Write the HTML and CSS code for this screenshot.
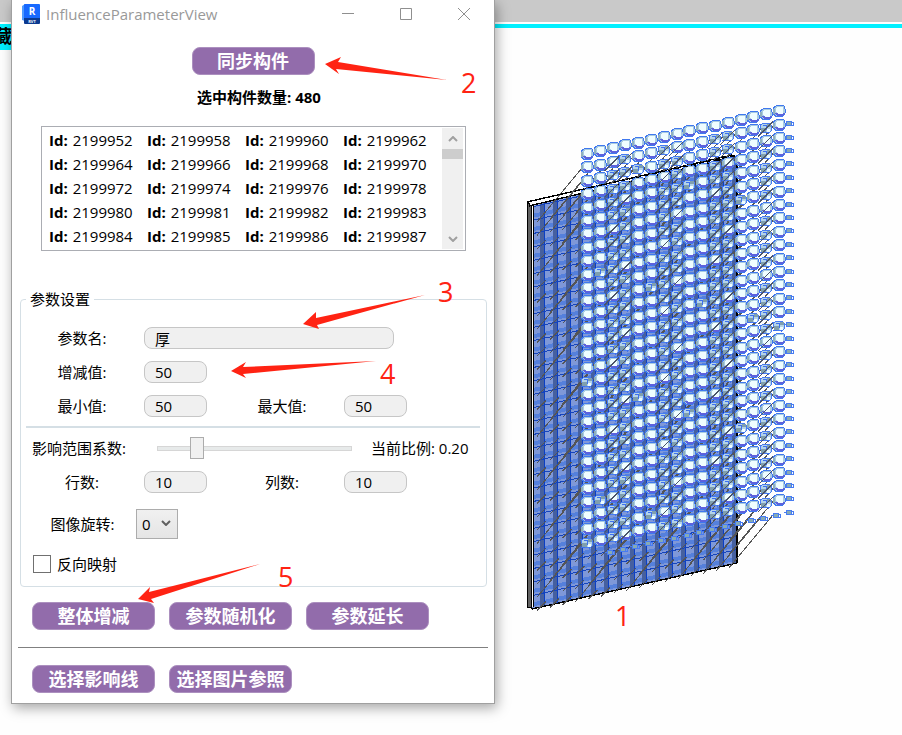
FILE: index.html
```html
<!DOCTYPE html>
<html lang="zh-CN">
<head>
<meta charset="utf-8">
<title>InfluenceParameterView</title>
<link rel="stylesheet" href="styles.css">
</head>
<body>
<main class="desktop">
  <div class="ribbon"></div>
  <div class="view-edge"></div>
  <span class="view-tab">藏</span>

  <svg class="model" viewBox="515 95 290 525" role="img" aria-label="三维模型" shape-rendering="crispEdges">
    <defs>
      <clipPath id="wallClip"><path d="M532 206L737 156V563L532 609Z"/></clipPath>
      <g id="ball">
        <path d="M-6-3L-3-5L2-6L5-5L6-2V2L4 5L-2 6L-6 3Z" fill="#a9cbe0" stroke="#3f78ef"/>
        <path d="M-5 2L-2 5L3 5L6 2L2 3L-2 2Z" fill="#5d62dc"/>
        <path d="M-5-2V3" stroke="#8eb0be" stroke-width="2"/>
        <path d="M-2-4H3L4-3V2L3 3H-1L-3 1V-3Z" fill="#effdff"/>
      </g>
      <g id="rough">
        <path d="M-6-2L-3-5L3-5L5-3L5 3L2 5L-4 4Z" fill="#b4d3e8" stroke="#477cf2"/>
        <path d="M-5 0H0V4H-5ZM1-4H5V-1H1Z" fill="#7f9fae"/>
        <path d="M-3-3H0V1H4M-6 4H-2M2 2V6M-7-4H-4" fill="none" stroke="#3e70ee"/>
        <path d="M1 1H4V4H1Z" fill="#effdff"/>
      </g>
      <g id="cap">
        <path d="M-3-2H2V2H-3Z" fill="#86aab5" stroke="#477cf2"/>
        <path d="M-5 0H-3M2-1H4V2H2" stroke="#477cf2" fill="none"/>
      </g>
    </defs>
    <g id="wall" clip-path="url(#wallClip)"></g>
    <path d="M527 202L531 205V608L527 607Z" fill="#626262" stroke="#000"/>
    <path d="M527 202L732 155M529 206L737 156M532 609L737 563" fill="none" stroke="#000" stroke-width="1.4"/>
    <path d="M530 204L580 192" stroke="#fff" stroke-width="2"/>
    <path d="M533 206V607M737 156V563" stroke="#000" stroke-width="1.6"/>
    <path d="M532 206V607" stroke="#fff"/>
    <g id="rods" fill="none" stroke="#555"></g>
    <g id="balls"></g>
    <path d="M527 202L737 155" stroke="#000" stroke-dasharray="5 3"/>
  </svg>

  <section class="window">
    <header class="titlebar">
      <svg class="app-icon" viewBox="0 0 18 20" aria-hidden="true">
        <path d="M0 2L3 0V17L0 16Z" fill="#4f9bff"/>
        <rect x="2" y="0" width="16" height="16" rx="1" fill="#1769ff"/>
        <path d="M2 14H18V19Q18 20 17 20H3Q2 20 2 19Z" fill="#0b3a91"/>
        <text x="10" y="11" class="icon-letter">R</text>
        <text x="10" y="19" class="icon-tag">RVT</text>
      </svg>
      <h1 class="title">InfluenceParameterView</h1>
      <button class="caption" aria-label="最小化"><svg viewBox="0 0 14 14"><path d="M1 6.500H13"/></svg></button>
      <button class="caption" aria-label="最大化"><svg viewBox="0 0 14 14"><path d="M1.500 1.500H12.500V12.500H1.500Z"/></svg></button>
      <button class="caption" aria-label="关闭"><svg viewBox="0 0 14 14"><path d="M1 1L13 13M13 1L1 13"/></svg></button>
    </header>

    <div class="sync"><button class="action">同步构件</button></div>
    <p class="count">选中构件数量: 480</p>

    <div class="listbox">
      <ul class="ids">
        <li><b>Id:</b> 2199952</li><li><b>Id:</b> 2199958</li><li><b>Id:</b> 2199960</li><li><b>Id:</b> 2199962</li>
        <li><b>Id:</b> 2199964</li><li><b>Id:</b> 2199966</li><li><b>Id:</b> 2199968</li><li><b>Id:</b> 2199970</li>
        <li><b>Id:</b> 2199972</li><li><b>Id:</b> 2199974</li><li><b>Id:</b> 2199976</li><li><b>Id:</b> 2199978</li>
        <li><b>Id:</b> 2199980</li><li><b>Id:</b> 2199981</li><li><b>Id:</b> 2199982</li><li><b>Id:</b> 2199983</li>
        <li><b>Id:</b> 2199984</li><li><b>Id:</b> 2199985</li><li><b>Id:</b> 2199986</li><li><b>Id:</b> 2199987</li>
      </ul>
      <div class="scrollbar">
        <button class="scroll-step" aria-label="向上滚动"><svg viewBox="0 0 10 6"><path d="M1 5L5 1L9 5"/></svg></button>
        <div class="scroll-thumb"></div>
        <button class="scroll-step scroll-down" aria-label="向下滚动"><svg viewBox="0 0 10 6"><path d="M1 1L5 5L9 1"/></svg></button>
      </div>
    </div>

    <fieldset class="params">
      <legend>参数设置</legend>
      <div class="row">
        <label for="pname">参数名:</label><input class="field wide" id="pname" value="厚">
      </div>
      <div class="row">
        <label for="delta">增减值:</label><input class="field" id="delta" value="50">
      </div>
      <div class="row">
        <label for="vmin">最小值:</label><input class="field" id="vmin" value="50">
        <label for="vmax">最大值:</label><input class="field" id="vmax" value="50">
      </div>
      <hr class="divider">
      <div class="row slider-row">
        <label for="ratio">影响范围系数:</label>
        <input class="slider" id="ratio" type="range" min="0" max="1" step="any" value="0.18">
        <output for="ratio">当前比例: 0.20</output>
      </div>
      <div class="row">
        <label for="rows">行数:</label><input class="field" id="rows" value="10">
        <label for="cols">列数:</label><input class="field" id="cols" value="10">
      </div>
      <div class="row rotate-row">
        <label for="rotate">图像旋转:</label>
        <span class="combo">
          <select id="rotate"><option>0</option></select>
          <svg viewBox="0 0 10 6" aria-hidden="true"><path d="M1 1L5 5L9 1"/></svg>
        </span>
      </div>
      <label class="check"><input type="checkbox">反向映射</label>
    </fieldset>

    <div class="actions">
      <button class="action">整体增减</button>
      <button class="action">参数随机化</button>
      <button class="action">参数延长</button>
    </div>
    <hr class="rule">
    <div class="actions">
      <button class="action">选择影响线</button>
      <button class="action">选择图片参照</button>
    </div>
  </section>

  <svg class="notes" viewBox="0 0 902 735">
    <path d="M325 64L341 57L338 62L447 80L336 69L339 74Z"/>
    <path d="M303 324L316 312L316 318L425 295L317 325L319 329Z"/>
    <path d="M231 371L246 362L243 367L376 361L243 374L246 378Z"/>
    <path d="M138 599L150 587L149 592L260 564L151 599L154 603Z"/>
    <text x="461" y="93">2</text>
    <text x="438" y="302">3</text>
    <text x="380" y="384">4</text>
    <text x="278" y="587">5</text>
    <text x="615" y="626">1</text>
  </svg>
</main>
<script src="model.js"></script>
</body>
</html>
```
FILE: styles.css
```css
* { box-sizing: border-box; }

body {
  margin: 0;
  background: #fefefe;
  color: #000;
  font: 15px/20px "Open Sans", "Noto Sans CJK SC", sans-serif;
}

button, input, select { font: inherit; color: inherit; }

.desktop {
  position: relative;
  min-height: 100vh;
  overflow: hidden;
}

.ribbon { height: 22px; background: #c9c9c9; }

.view-edge { height: 4px; margin-top: 2px; background: #00f0ff; }

.view-tab {
  position: absolute;
  left: 0;
  top: 24px;
  width: 12px;
  height: 26px;
  display: flex;
  justify-content: flex-end;
  overflow: hidden;
  background: #00f0ff;
  font-size: 18px;
  line-height: 25px;
  font-weight: 700;
}

.model {
  position: absolute;
  left: 515px;
  top: 95px;
  width: 290px;
  height: 525px;
}

.window {
  position: absolute;
  left: 11px;
  top: 0;
  width: 484px;
  padding-bottom: 10px;
  border: 1px solid #a0a0a0;
  border-top: 0;
  background: #fff;
  box-shadow: 2px 4px 12px rgba(0, 0, 0, .35);
}

.titlebar {
  display: flex;
  align-items: center;
  height: 28px;
  padding: 0 1px 0 10px;
}

.app-icon { width: 18px; height: 20px; }

.icon-letter {
  font-size: 10px;
  font-weight: 700;
  fill: #fff;
  text-anchor: middle;
}

.icon-tag {
  font-size: 4px;
  font-weight: 700;
  fill: #fff;
  text-anchor: middle;
}

.title {
  flex: 1;
  margin: 0 0 0 6px;
  color: #999;
  font-size: 15px;
  font-weight: 400;
}

.caption {
  display: grid;
  place-items: center;
  width: 58px;
  height: 28px;
  padding: 0;
  border: 0;
  background: none;
}

.caption svg {
  width: 14px;
  height: 14px;
  fill: none;
  stroke: #8f8f8f;
}

.sync {
  display: flex;
  justify-content: center;
  padding-top: 19px;
}

.action {
  width: 123px;
  height: 28px;
  padding: 0;
  border: 1px solid #ac90bf;
  border-radius: 8px;
  background: #926cab;
  color: #fff;
  font-size: 18px;
  line-height: 24px;
  font-weight: 700;
}

.count {
  margin: 12px 0 19px;
  padding-left: 12px;
  text-align: center;
  font-weight: 700;
}

.listbox {
  display: flex;
  margin: 0 28px 0 29px;
  padding: 1px 2px 1px 0;
  border: 1px solid #abadb3;
}

.ids {
  flex: 1;
  display: grid;
  grid-template-columns: repeat(4, 98px);
  margin: 0;
  padding: 0 0 1px 7px;
  list-style: none;
  line-height: 24px;
}

.ids li { white-space: nowrap; }

.ids b { margin-right: 1px; }

.scrollbar {
  display: flex;
  flex-direction: column;
  width: 21px;
  background: #f0f0f0;
}

.scroll-step {
  display: grid;
  place-items: center;
  height: 21px;
  padding: 0;
  border: 0;
  background: none;
}

.scroll-step svg, .combo svg {
  width: 10px;
  height: 6px;
  fill: none;
  stroke: #a0a0a0;
  stroke-width: 2;
}

.scroll-down { margin-top: auto; }

.scroll-thumb { height: 10px; background: #cdcdcd; }

.params {
  margin: 38px 7px 0 8px;
  padding: 12px 6px 7px 5px;
  border: 1px solid #d5dfe5;
  border-radius: 4px;
}

.params legend { padding: 0 4px; }

.row {
  display: grid;
  grid-template-columns: 112px 76px 112px 1fr;
  column-gap: 6px;
  align-items: center;
  height: 34px;
}

.row label { text-align: center; }

.field {
  width: 63px;
  height: 22px;
  padding: 0 10px;
  border: 1px solid #c6c6c6;
  border-radius: 8px;
  background: #f0f0f0;
}

.wide { grid-column: 2 / -1; width: 250px; }

.divider {
  height: 2px;
  margin: 3px 0;
  border: 0;
  background: #d5dfe5;
}

.slider-row { grid-template-columns: 112px 195px 1fr; column-gap: 19px; }

.slider-row label { white-space: nowrap; padding-right: 6px; }

.slider {
  appearance: none;
  width: 100%;
  height: 22px;
  margin: 0;
  background: none;
}

.slider::-webkit-slider-runnable-track {
  height: 5px;
  border: 1px solid #d6d6d6;
  background: #e7eaea;
}

.slider::-webkit-slider-thumb {
  appearance: none;
  width: 14px;
  height: 22px;
  margin-top: -10px;
  border: 1px solid #acacac;
  background: #f0f0f0;
}

.rotate-row { height: 50px; column-gap: 0; grid-template-columns: 110px 1fr; }

.rotate-row label { padding-left: 3px; }

.combo { position: relative; width: 42px; }

.combo select {
  display: block;
  appearance: none;
  width: 42px;
  height: 30px;
  padding: 0 5px;
  border: 1px solid #acacac;
  border-radius: 0;
  background: linear-gradient(#f0f0f0, #e5e5e5);
}

.combo svg {
  position: absolute;
  right: 7px;
  top: 11px;
  stroke: #606060;
}

.check {
  display: flex;
  align-items: center;
  gap: 6px;
  height: 30px;
  padding-left: 7px;
}

.check input {
  appearance: none;
  width: 18px;
  height: 18px;
  margin: 0;
  border: 1px solid #707070;
  background: #fff;
}

.actions {
  display: flex;
  gap: 14px;
  padding: 15px 20px 0;
}

.rule {
  height: 1px;
  margin: 17px 6px 2px;
  border: 0;
  background: #808080;
}

.notes {
  position: absolute;
  left: 0;
  top: 0;
  width: 902px;
  height: 735px;
  fill: #ff2313;
  font-size: 27px;
  pointer-events: none;
}
```
FILE: model.js
```js
// Draws the 16 x 30 panel wall, its connecting rods and the ball markers.
const COLS = 16;
const ROWS = 30;
const DX = 12.8;
const DY = 13.4;
const SKEW = -2.85;

const part = (x, y, name) => `<use href="#${name}" x="${Math.round(x)}" y="${Math.round(y)}"/>`;

let wall = '<path d="M532 150H740V612H532Z" fill="#7f98d8"/>';
for (let r = 0; r < ROWS + 4; r++) {
  const y = 207 + r * DY;
  wall += `<path d="M532 ${y + 7}L737 ${y - 39}v4L532 ${y + 11}Z" fill="#5580dc"/>`;
}
for (let c = 0; c < COLS; c++) {
  const x = 532 + c * DX;
  wall += `<path d="M${x + 8} 150h4V612h-4Z" fill="#46609f"/>`;
  wall += `<path d="M${x + 12.5} 150V612" stroke="#0b3fc4"/>`;
}
for (let r = 0; r < ROWS + 4; r++) {
  const y = 207 + r * DY;
  wall += `<path d="M532 ${y}L737 ${y - 46}" stroke="#1544bd"/>`;
}
document.getElementById('wall').innerHTML = wall;

let rods = '';
let under = '';
let over = '';
for (let r = 0; r < ROWS; r++) {
  for (let c = 0; c < COLS; c++) {
    const x = 587 + c * DX;
    const y = 154 + c * SKEW + r * DY;
    const clean = r === 0 || c === 15 || c % 4 < 2;
    const wx = 537 + c * DX;
    const wy = 222 + c * SKEW + r * DY;
    // Full rods along the outer panels, short stubs inside the wall.
    rods += r < 2 || c > 12 || (r + c) % 4 === 0
      ? `<path d="M${wx} ${wy}L${x - 5} ${y + 14}"/>`
      : `<path d="M${wx} ${wy}l9 -9"/>`;
    if (clean) {
      const messy = (r > 0 && (c * 5 + r * 7) % 17 === 0) || (r === ROWS - 1 && c === 0);
      over += part(x, y, messy ? 'rough' : 'ball');
    } else {
      under += part(x, y, (c + r * 3) % 5 === 0 ? 'ball' : 'rough');
      under += `<path d="M${x - 8} ${y + 9}L${x + 7} ${y - 6}" stroke="#4b5468"/>`;
    }
    if (c === 15 || (r === ROWS - 1 && c > 0)) over += part(x + 10, y + 12, 'cap');
  }
}
document.getElementById('rods').innerHTML = rods;
document.getElementById('balls').innerHTML = under + over;
```
